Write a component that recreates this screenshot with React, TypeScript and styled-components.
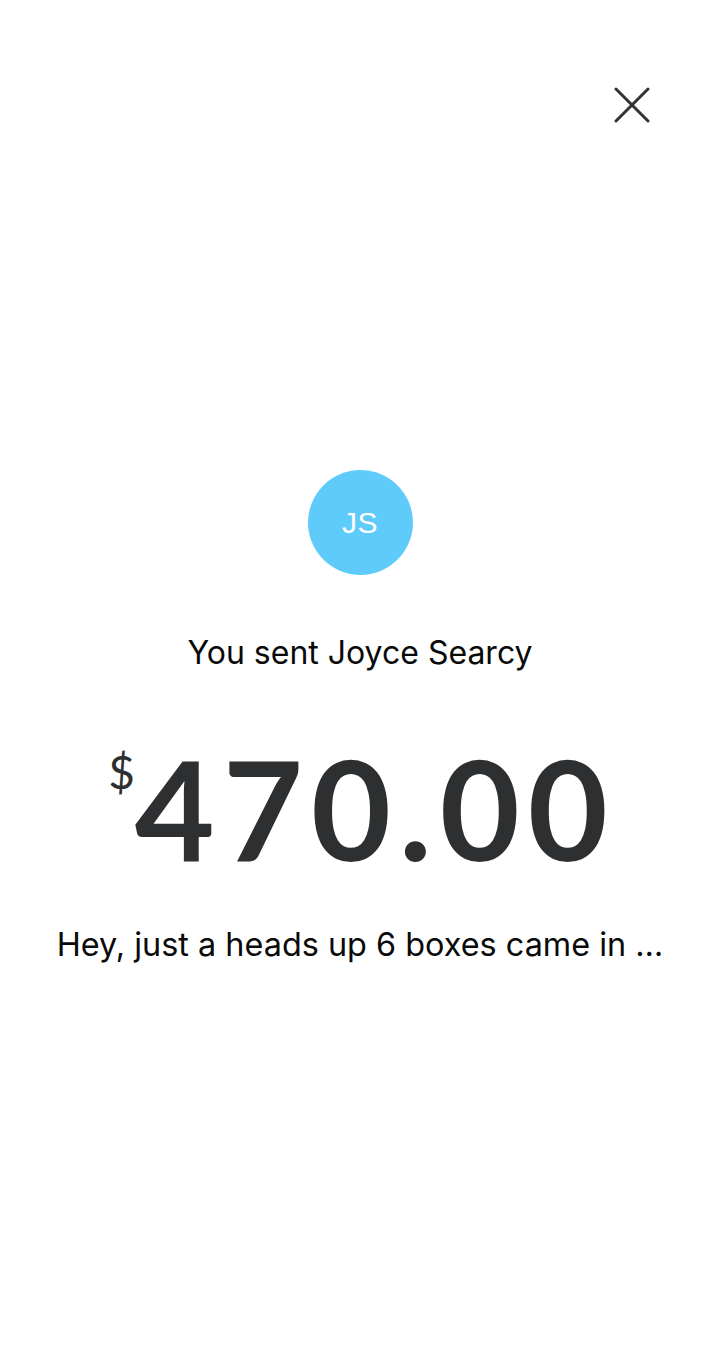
import React from 'react'
import styled, { createGlobalStyle } from 'styled-components'

const GlobalStyle = createGlobalStyle`
  html, body {
    margin: 0;
    padding: 0;
    background: #ffffff;
  }
  body {
    font-family: Inter, "Noto Sans", "Liberation Sans", sans-serif;
  }
`

const Screen = styled.div`
  width: 720px;
  height: 1369px;
  display: flex;
  flex-direction: column;
  background: #ffffff;
  overflow: hidden;
`

const TopBar = styled.div`
  display: flex;
  justify-content: flex-end;
  padding: 85px 68px 0 0;
`

const CloseButton = styled.button`
  width: 40px;
  height: 40px;
  padding: 0;
  border: none;
  background: transparent;
  display: flex;
  align-items: center;
  justify-content: center;
  cursor: pointer;
`

const Content = styled.div`
  display: flex;
  flex-direction: column;
  align-items: center;
  padding-top: 345px;
`

const Avatar = styled.div<{ $bg: string }>`
  width: 105px;
  height: 105px;
  border-radius: 50%;
  background: ${(p) => p.$bg};
  color: #ffffff;
  display: flex;
  align-items: center;
  justify-content: center;
  font-family: "Liberation Sans", Arial, sans-serif;
  font-size: 30px;
  letter-spacing: 0.5px;
`

const Title = styled.div`
  margin-top: 58px;
  font-family: Inter, "Liberation Sans", sans-serif;
  font-size: 32px;
  color: #0a0a0a;
`

const Amount = styled.div`
  margin-top: 67px;
  margin-left: -4px;
  display: flex;
  align-items: flex-start;
  color: #2d2f31;
  font-family: Lato, "Liberation Sans", sans-serif;
`

const Currency = styled.span`
  font-size: 46px;
  font-weight: 400;
  line-height: 1;
  margin-top: 10px;
  margin-right: 0;
`

const Value = styled.span`
  font-size: 138px;
  font-weight: 700;
  line-height: 138px;
  letter-spacing: 8px;
  margin-right: -8px;
`

const Note = styled.div`
  margin-top: 48px;
  font-family: Inter, "Liberation Sans", sans-serif;
  font-size: 32.4px;
  color: #0a0a0a;
`

const App = () => {
  return (
    <>
      <GlobalStyle />
      <Screen>
        <TopBar>
          <CloseButton aria-label="Close">
            <svg width="36" height="36" viewBox="0 0 36 36">
              <path d="M2 2 L34 34 M34 2 L2 34" stroke="#333" strokeWidth="3" strokeLinecap="round" fill="none" />
            </svg>
          </CloseButton>
        </TopBar>
        <Content>
          <Avatar $bg="#5ecbfb">JS</Avatar>
          <Title>You sent Joyce Searcy</Title>
          <Amount>
            <Currency>$</Currency>
            <Value>470.00</Value>
          </Amount>
          <Note>Hey, just a heads up 6 boxes came in …</Note>
        </Content>
      </Screen>
    </>
  )
}

export default App
